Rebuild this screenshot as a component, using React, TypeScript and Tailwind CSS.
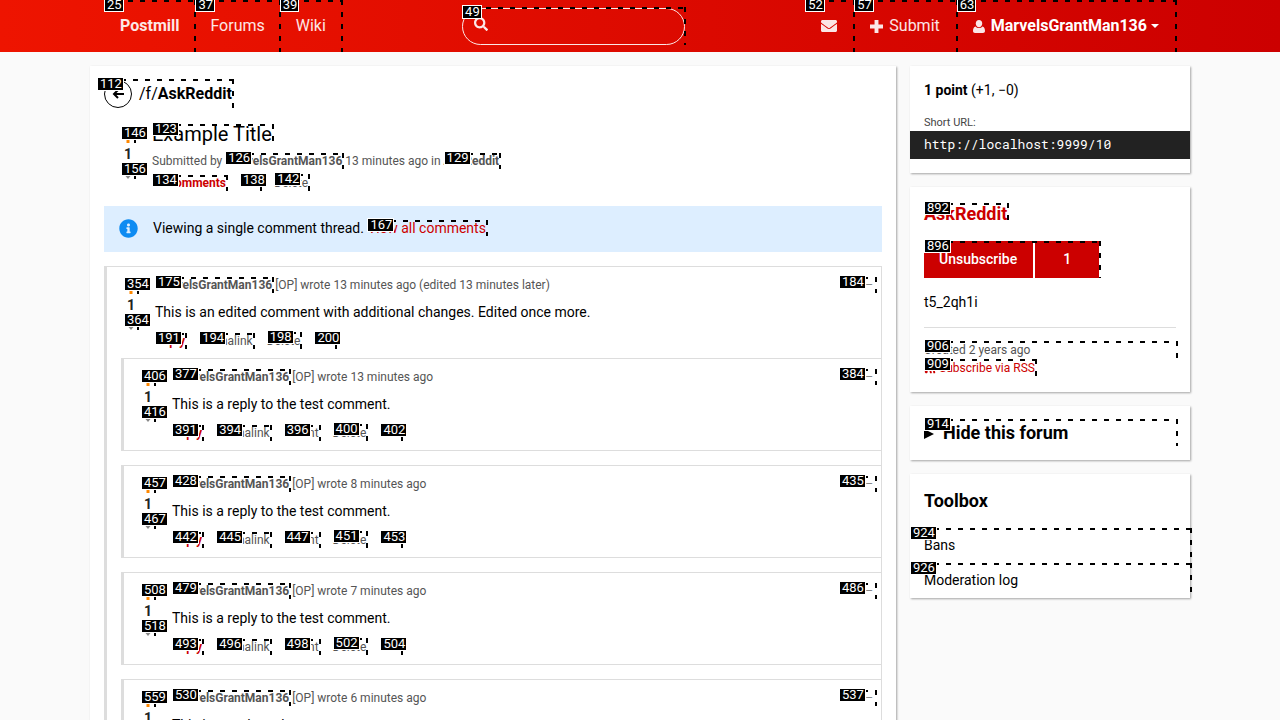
import type { ReactNode } from "react";
import { FaEnvelope, FaInfoCircle, FaRss, FaSearch } from "react-icons/fa";

const USER = "MarvelsGrantMan136";

/* Numbered marker with dashed top and right edges, laid over its parent. */
function Mark({ id, area = "inset-0 -right-0.5" }: { id: number; area?: string }) {
  return (
    <span aria-hidden="true" className={`pointer-events-none absolute z-10 block ${area}`}>
      <span className="absolute inset-x-0 top-0 h-0.5 bg-[repeating-linear-gradient(90deg,#000_0_5px,transparent_5px_12px)]" />
      <span className="absolute inset-y-0 right-0 w-0.5 bg-[repeating-linear-gradient(180deg,#000_0_5px,transparent_5px_12px)]" />
      <span className="absolute -top-0.5 left-0 border border-white bg-black pr-px pl-0.5 text-[13px] leading-3 font-normal text-white">
        {id}
      </span>
    </span>
  );
}

function NavItem({ id, pad = "px-4", children }: { id: number; pad?: string; children: ReactNode }) {
  return (
    <a href="#" className={`relative flex h-[52px] items-center text-base text-white/90 ${pad}`}>
      {children}
      <Mark id={id} area="inset-0 -right-px" />
    </a>
  );
}

function SmallLink({ id, className = "", children }: { id: number; className?: string; children: ReactNode }) {
  return (
    <a href="#" className={`relative inline-block leading-4 ${className}`}>
      {children}
      <Mark id={id} />
    </a>
  );
}

function Vote({ up, down, pad = "pt-[3px]" }: { up: number; down: number; pad?: string }) {
  return (
    <div className={`flex w-5 shrink-0 flex-col items-center text-sm ${pad}`}>
      <button type="button" aria-label="Upvote" className="relative flex h-[15px] w-4 items-end justify-center text-[#f80]">
        <svg viewBox="0 0 12 12" className="size-3">
          <path d="M6 0 11 6H7.5v6h-3V6H1z" fill="currentColor" />
        </svg>
        <Mark id={up} area="inset-y-0 left-px right-0" />
      </button>
      <span className="pt-px leading-5 font-bold text-[#222]">1</span>
      <button type="button" aria-label="Downvote" className="relative flex h-[15px] w-4 items-end justify-center text-[#888]">
        <svg viewBox="0 0 12 12" className="size-3">
          <path d="M6 12 11 6H8V0H4v6H1z" fill="currentColor" />
        </svg>
        <Mark id={down} area="inset-y-0 left-px right-0" />
      </button>
    </div>
  );
}

type CommentData = {
  up: number;
  down: number;
  author: number;
  collapse: number;
  meta: string;
  body: string;
  links: { id: number; label: string }[];
};

function actions(reply: number, perma: number, parent: number | null, del: number, edit: number) {
  const items = [
    { id: reply, label: "Reply" },
    { id: perma, label: "Permalink" },
  ];
  if (parent !== null) items.push({ id: parent, label: "Parent" });
  items.push({ id: del, label: "Delete" }, { id: edit, label: "Edit" });
  return items;
}

const REPLY = "This is a reply to the test comment.";

const root: CommentData = {
  up: 354, down: 364, author: 175, collapse: 184,
  meta: "wrote 13 minutes ago (edited 13 minutes later)",
  body: "This is an edited comment with additional changes. Edited once more.",
  links: actions(191, 194, null, 198, 200),
};

const replies: CommentData[] = [
  { up: 406, down: 416, author: 377, collapse: 384, meta: "wrote 13 minutes ago", body: REPLY, links: actions(391, 394, 396, 400, 402) },
  { up: 457, down: 467, author: 428, collapse: 435, meta: "wrote 8 minutes ago", body: REPLY, links: actions(442, 445, 447, 451, 453) },
  { up: 508, down: 518, author: 479, collapse: 486, meta: "wrote 7 minutes ago", body: REPLY, links: actions(493, 496, 498, 502, 504) },
  { up: 559, down: 569, author: 530, collapse: 537, meta: "wrote 6 minutes ago", body: REPLY, links: actions(544, 547, 549, 553, 555) },
];

function Comment({ data, children }: { data: CommentData; children?: ReactNode }) {
  return (
    <article className="border border-l-[3px] border-[#ddd]">
      <div className="flex gap-[14px] pt-[9px] pr-1 pb-2 pl-[14px]">
        <Vote up={data.up} down={data.down} />
        <div className="min-w-0 flex-1">
          <div className="flex h-[18px] items-center justify-between text-xs text-[#555]">
            <p>
              <SmallLink id={data.author} className="font-bold">{USER}</SmallLink> [OP] {data.meta}
            </p>
            <button type="button" aria-label="Collapse" className="relative w-[38px] pr-1 text-right leading-4 text-[#888]">
              –<Mark id={data.collapse} area="inset-0" />
            </button>
          </div>
          <p className="mt-2 text-sm leading-5">{data.body}</p>
          <div className="mt-[10px] flex h-[18px] items-center gap-[14px] text-xs text-[#555]">
            {data.links.map((l) =>
              l.label === "Delete" ? (
                <button key={l.id} type="button" className="relative leading-[18px]">
                  {l.label}
                  <Mark id={l.id} />
                </button>
              ) : (
                <SmallLink key={l.id} id={l.id} className={l.label === "Reply" ? "font-bold text-[#c00]" : ""}>
                  {l.label}
                </SmallLink>
              ),
            )}
          </div>
        </div>
      </div>
      {children}
    </article>
  );
}

function Card({ className = "", children }: { className?: string; children: ReactNode }) {
  return <section className={`bg-white shadow-[1px_1px_2px_rgba(0,0,0,0.35)] ${className}`}>{children}</section>;
}

export default function App() {
  return (
    <div className="h-screen overflow-hidden bg-[#fafafa] font-[Roboto,sans-serif] text-sm text-black">
      <header className="bg-linear-to-r from-[#ee1400] to-[#c00]">
        <div className="mx-auto flex max-w-[1100px] items-center justify-between px-[14px]">
          <nav className="flex">
            <NavItem id={25}><b>Postmill</b></NavItem>
            <NavItem id={37} pad="px-[15px]">Forums</NavItem>
            <NavItem id={39}>Wiki</NavItem>
          </nav>
          <form className="relative flex w-[223px] items-center">
            <FaSearch className="absolute left-3 size-[14px] -translate-y-0.5 text-white/90" />
            <input type="search" aria-label="Search" className="h-[37px] w-full rounded-full border border-white/90 pl-9 text-white outline-none" />
            <Mark id={49} area="inset-0 -top-px -right-px" />
          </form>
          <nav className="flex">
            <NavItem id={52} pad="pl-4 pr-[17px]"><FaEnvelope className="size-4" aria-label="Messages" /></NavItem>
            <NavItem id={57} pad="pl-4 pr-[17px]">
              <svg viewBox="0 0 12 12" className="mr-1.5 size-[13px]" fill="currentColor">
                <path d="M4.2 0h3.6v4.2H12v3.6H7.8V12H4.2V7.8H0V4.2h4.2z" />
              </svg>
              Submit
            </NavItem>
            <NavItem id={63} pad="pl-4 pr-[17px]">
              <svg viewBox="0 0 12 13" className="mr-1.5 h-[13px] w-3" fill="currentColor">
                <path d="M6 0c2 0 3.2 1.5 3.2 3.4S8 7.2 6 7.2 2.800 5.300 2.800 3.400 4 0 6 0z" />
                <path d="M2.600 6.400C.8 6.900 0 8.500 0 11c0 1.300.8 2 2 2h8c1.200 0 2-.7 2-2 0-2.500-.8-4.100-2.600-4.600C8.500 7.400 7.400 8 6 8s-2.500-.6-3.400-1.600z" />
              </svg>
              <b className="text-white">{USER}</b>
              <span className="ml-1 border-x-4 border-t-4 border-x-transparent border-t-white" />
            </NavItem>
          </nav>
        </div>
      </header>

      <div className="mx-auto mt-[14px] flex max-w-[1100px] items-start gap-[14px]">
        <Card className="min-w-0 flex-1 p-[14px]">
          <main>
            <h1 className="flex text-base">
              <a href="#" className="relative flex items-center gap-[7px]">
                <span className="flex size-7 items-center justify-center rounded-full border border-black">
                  <svg viewBox="0 0 12 10" className="h-[10px] w-3" fill="none" stroke="currentColor" strokeWidth="2">
                    <path d="M12 5H2M6 1 2 5l4 4" />
                  </svg>
                </span>
                <span>/f/<b>AskReddit</b></span>
                <Mark id={112} area="-top-px -left-[7px] -right-0.5 bottom-0" />
              </a>
            </h1>

            <div className="mt-4 flex gap-[14px] pl-[14px]">
              <Vote up={146} down={156} pad="pt-1" />
              <div className="min-w-0 flex-1 text-xs text-[#555]">
                <h2 className="flex text-xl leading-5 text-black">
                  <a href="#" className="relative">Example Title<Mark id={123} /></a>
                </h2>
                <p className="mt-2 leading-[18px]">
                  Submitted by <SmallLink id={126} className="font-bold">{USER}</SmallLink> 13 minutes ago in{" "}
                  <SmallLink id={129} className="font-bold">AskReddit</SmallLink>
                </p>
                <div className="mt-1 flex h-[18px] items-center gap-[14px]">
                  <SmallLink id={134} className="font-bold text-[#c00]">15 comments</SmallLink>
                  <SmallLink id={138}>Edit</SmallLink>
                  <button type="button" className="relative leading-[18px]">Delete<Mark id={142} /></button>
                </div>
              </div>
            </div>

            <div className="mt-[14px] flex items-center bg-[#def] pt-3 pb-[14px] pl-[15px] leading-5">
              <FaInfoCircle className="mr-[15px] size-[19px] text-[#0d8bf2]" />
              <p>
                Viewing a single comment thread.{" "}
                <a href="#" className="relative inline-block leading-4 text-[#c00]">View all comments<Mark id={167} /></a>
              </p>
            </div>

            <div className="mt-[14px]">
              <Comment data={root}>
                <div className="-mr-px ml-[14px] flex flex-col gap-[14px]">
                  {replies.map((r) => <Comment key={r.author} data={r} />)}
                </div>
              </Comment>
            </div>
          </main>
        </Card>

        <aside className="flex w-[280px] shrink-0 flex-col gap-[14px]">
          <Card className="py-[14px]">
            <p className="px-[14px] leading-5"><b>1 point</b> (+1, −0)</p>
            <p className="mt-[14px] px-[14px] text-[11px] leading-[17px] text-[#444]">Short URL:</p>
            <p className="bg-[#222] px-[14px] pb-0.5 font-['Roboto_Mono','Liberation_Mono',monospace] text-[13px] leading-[26px] text-white">
              http://localhost:9999/10
            </p>
          </Card>

          <Card className="px-[14px] pt-[14px] pb-[15px]">
            <h2 className="flex pt-[3px] text-lg leading-5 font-bold text-[#c00]">
              <a href="#" className="relative">AskReddit<Mark id={892} area="inset-0 -top-px -right-0.5" /></a>
            </h2>
            <button type="button" className="relative mt-[17px] flex h-[37px] leading-[37px] font-medium text-white">
              <span className="bg-[#c00] pr-4 pl-[15px]">Unsubscribe</span>
              <span className="ml-0.5 w-16 bg-[#c00]">1</span>
              <Mark id={896} />
            </button>
            <p className="mt-[14px] leading-5">t5_2qh1i</p>
            <hr className="mt-[15px] mb-[13px] border-[#ddd]" />
            <p className="relative text-xs leading-[18px] text-[#555]">Created 2 years ago<Mark id={906} /></p>
            <p className="flex text-xs leading-[18px] text-[#c00]">
              <a href="#" className="relative flex items-center gap-[3px]">
                <FaRss className="size-3" />
                Subscribe via RSS
                <Mark id={909} />
              </a>
            </p>
          </Card>

          <Card className="p-[14px]">
            <div className="relative flex h-[26px] items-center text-lg font-bold">
              <svg viewBox="0 0 10 10" className="mt-0.5 mr-[9px] size-[10px]"><path d="M0 0 10 5 0 10z" /></svg>
              <h2>Hide this forum</h2>
              <Mark id={914} area="inset-0 -top-px -right-0.5" />
            </div>
          </Card>

          <Card>
            <h2 className="px-[14px] pt-[14px] pb-[14px] text-lg leading-[26px] font-bold">Toolbox</h2>
            <ul>
              <li><a href="#" className="relative block px-[14px] leading-[35px]">Bans<Mark id={924} /></a></li>
              <li><a href="#" className="relative block px-[14px] leading-[35px]">Moderation log<Mark id={926} /></a></li>
            </ul>
          </Card>
        </aside>
      </div>
    </div>
  );
}
